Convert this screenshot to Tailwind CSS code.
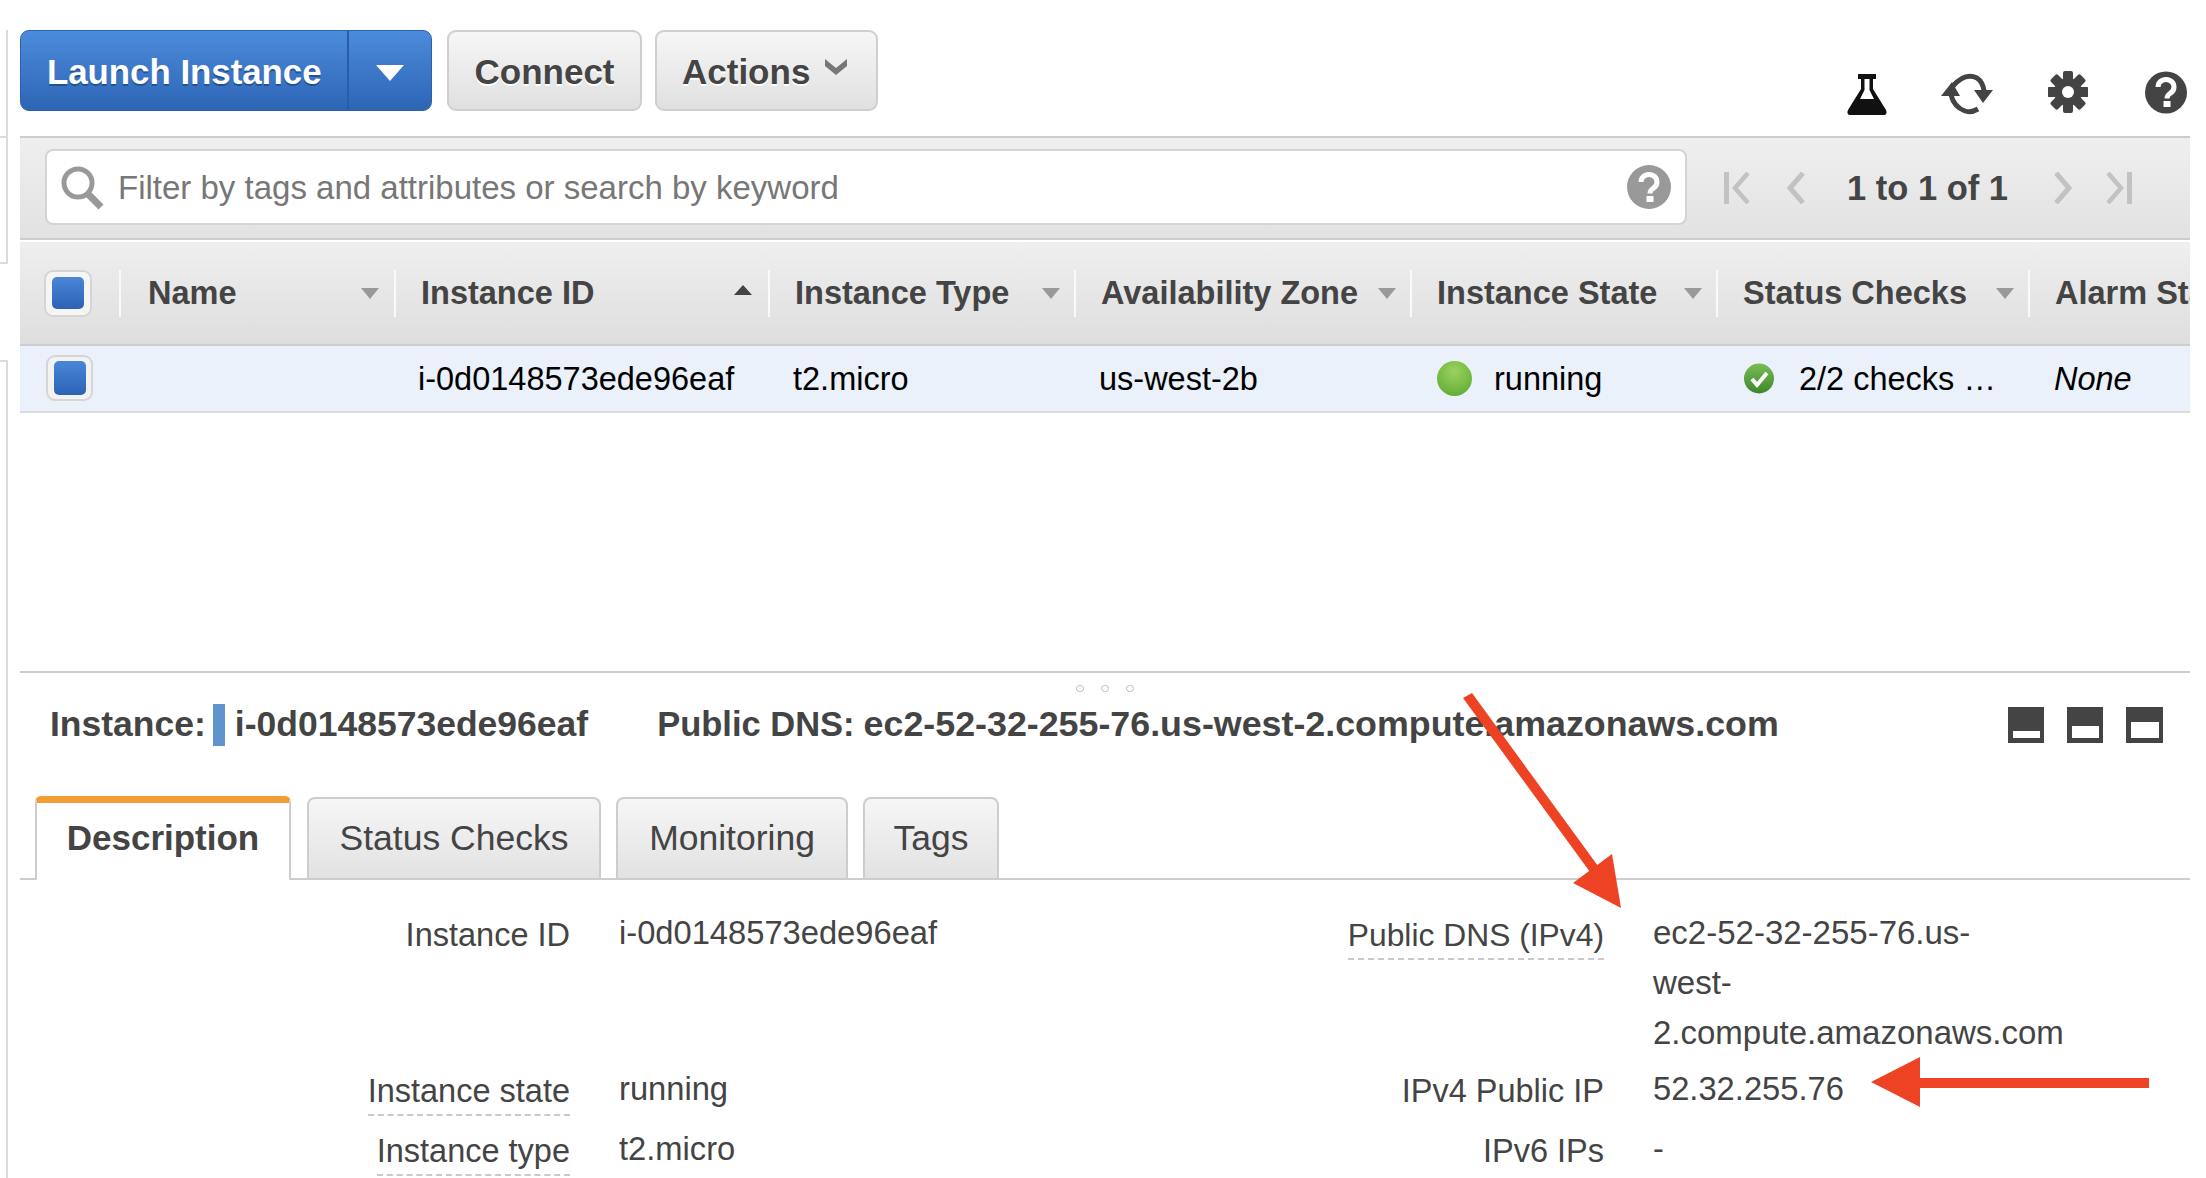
<!DOCTYPE html>
<html lang="en">
<head>
  <meta charset="UTF-8" />
  <title>EC2 Instances</title>
  <script src="https://cdn.jsdelivr.net/npm/@tailwindcss/browser@4"></script>
</head>
<body class="relative h-[1178px] w-[2206px] overflow-hidden bg-white font-['Liberation_Sans',Arial,sans-serif] text-[#444]">
  <!-- sidebar edge -->
  <div class="absolute left-0 top-[30px] h-[108px] w-[8px] border-r-2 border-b-2 border-[#dcdcdc]"></div>
  <div class="absolute left-0 top-[138px] h-[126px] w-[8px] border-r-2 border-b-2 border-[#dcdcdc]"></div>
  <div class="absolute left-0 top-[360px] h-[818px] w-[8px] border-r-2 border-t-2 border-[#dcdcdc]"></div>

  <main class="ml-[20px] flex w-[2170px] flex-col">
    <!-- action bar -->
    <div class="flex h-[136px] items-start pt-[30px]">
      <div class="flex h-[81px] w-[412px] rounded-[9px] border border-[#2a62b0] bg-gradient-to-b from-[#4c8bdb] to-[#2e65b5] text-white">
        <div class="flex w-[328px] items-center border-r-2 border-[#2a5da8] pl-[26px] pt-[3px] text-[34.800px] font-bold [text-shadow:0_2px_0_#24528f]">Launch Instance</div>
        <div class="flex flex-1 items-center justify-center pt-[4px]">
          <svg width="28" height="16" viewBox="0 0 28 16"><path d="M0 0h28L14 16z" fill="#fff"/></svg>
        </div>
      </div>
      <div class="ml-[15px] flex h-[81px] w-[195px] items-center justify-center rounded-[9px] border-2 border-[#cfcfcf] bg-gradient-to-b from-[#f6f6f6] to-[#e0e0e0] pt-[3px] text-[35px] font-bold [text-shadow:0_2px_0_#fff]">Connect</div>
      <div class="ml-[13px] flex h-[81px] w-[223px] items-center rounded-[9px] border-2 border-[#cfcfcf] bg-gradient-to-b from-[#f6f6f6] to-[#e0e0e0] pl-[25px] pt-[3px] text-[35px] font-bold [text-shadow:0_2px_0_#fff]">
        Actions
        <svg class="mb-[10px] ml-[14px]" width="24" height="18" viewBox="0 0 24 18"><path d="M1 1l11 9 11-9v7L12 17 1 8z" fill="#777"/></svg>
      </div>
      <div class="ml-auto flex h-[86px] items-end pb-[1px] pr-[3px]">
        <svg width="40" height="42" viewBox="0 0 40 42"><path d="M11 1h18v5h-3v10l13 21q2 5-3 5H4q-5 0-3-5L14 16V6h-3z" fill="#111"/><path d="M17.500 6h5v11l4.500 9H13l4.500-9z" fill="#fff"/></svg>
        <svg class="ml-[54px]" width="52" height="43" viewBox="0 0 52 43">
          <path d="M12 14Q24 0 36 6q6 4 7 13" fill="none" stroke="#444" stroke-width="5"/>
          <path d="M10 23q3 12 14 16 6 2 13-2" fill="none" stroke="#444" stroke-width="5"/>
          <path d="M11 10L0 24h19zM42 31L33 18h19z" fill="#444"/>
        </svg>
        <svg class="mb-[2px] ml-[55px]" width="40" height="42" viewBox="0 0 40 42">
          <g fill="#444">
            <circle cx="20" cy="21" r="14"/>
            <rect x="15" y="0" width="10" height="42" rx="2"/>
            <rect x="15" y="0" width="10" height="42" rx="2" transform="rotate(45 20 21)"/>
            <rect x="15" y="0" width="10" height="42" rx="2" transform="rotate(90 20 21)"/>
            <rect x="15" y="0" width="10" height="42" rx="2" transform="rotate(135 20 21)"/>
          </g>
          <circle cx="20" cy="21" r="6" fill="#fff"/>
        </svg>
        <svg class="mb-[1px] ml-[57px]" width="42" height="43" viewBox="0 0 42 43"><circle cx="21" cy="21.500" r="21" fill="#444"/><path d="M13 16a8 7.500 0 1 1 12 6.500q-3 2-3 5" fill="none" stroke="#fff" stroke-width="5"/><rect x="18.500" y="30" width="7" height="6" fill="#fff"/></svg>
      </div>
    </div>

    <!-- search bar -->
    <div class="flex h-[104px] items-center border-y-2 border-[#cdcdcd] bg-gradient-to-b from-[#efefef] to-[#e2e2e2] pl-[25px]">
      <div class="mb-[2px] flex h-[76px] w-[1642px] items-center rounded-[8px] border-2 border-[#d4d4d4] bg-white pl-[12px] pr-[14px]">
        <svg class="mt-[2px]" width="46" height="46" viewBox="0 0 46 46"><circle cx="19" cy="18" r="14" fill="none" stroke="#999" stroke-width="5"/><path d="M29 29l13 13" stroke="#999" stroke-width="7"/></svg>
        <span class="ml-[13px] mt-[2px] text-[33px] text-[#777]">Filter by tags and attributes or search by keyword</span>
        <svg class="ml-auto" width="44" height="44" viewBox="0 0 44 44"><circle cx="22" cy="22" r="22" fill="#999"/><path d="M14 17a8 7.500 0 1 1 12 6.500q-3 2-3 5" fill="none" stroke="#fff" stroke-width="5"/><rect x="19.500" y="31" width="7" height="6" fill="#fff"/></svg>
      </div>
      <svg class="ml-[37px]" width="26" height="32" viewBox="0 0 26 32"><rect x="0" y="0" width="5" height="32" fill="#c2c2c2"/><path d="M24 1L11 16l13 15" fill="none" stroke="#c2c2c2" stroke-width="4.500"/></svg>
      <svg class="ml-[37px]" width="18" height="32" viewBox="0 0 18 32"><path d="M16 1L3 16l13 15" fill="none" stroke="#c2c2c2" stroke-width="5"/></svg>
      <span class="ml-[42px] mt-[2px] text-[34.500px] font-bold">1 to 1 of 1</span>
      <svg class="ml-[46px]" width="18" height="32" viewBox="0 0 18 32"><path d="M2 1l13 15L2 31" fill="none" stroke="#c2c2c2" stroke-width="5"/></svg>
      <svg class="ml-[34px]" width="26" height="32" viewBox="0 0 26 32"><rect x="21" y="0" width="5" height="32" fill="#c2c2c2"/><path d="M2 1l13 15L2 31" fill="none" stroke="#c2c2c2" stroke-width="4.500"/></svg>
    </div>

    <!-- table header -->
    <div class="mt-[2px] grid h-[104px] grid-cols-[99px_275px_374px_306px_336px_306px_312px_1fr] items-center border-b-2 border-[#cdcdcd] bg-gradient-to-b from-[#efefef] to-[#dedede] text-[32.500px] font-bold">
      <div class="pl-[24px]"><div class="flex h-[47px] w-[48px] items-center justify-center rounded-[9px] border-2 border-[#d5d5d5] bg-[#f5f5f5]"><div class="h-[32px] w-[32px] rounded-[5px] bg-gradient-to-b from-[#4a86d8] to-[#2c62b4]"></div></div></div>
      <div class="flex h-[47px] items-center border-l-2 border-[#fafafa] pl-[27px] pr-[15px]">Name<svg class="ml-auto" width="18" height="11" viewBox="0 0 18 11"><path d="M0 0h18L9 11z" fill="#999"/></svg></div>
      <div class="flex h-[47px] items-center border-l-2 border-[#fafafa] pl-[25px] pr-[16px]">Instance ID<svg class="mb-[6px] ml-auto" width="18" height="10" viewBox="0 0 18 10"><path d="M0 10h18L9 0z" fill="#444"/></svg></div>
      <div class="flex h-[47px] items-center border-l-2 border-[#fafafa] pl-[25px] pr-[14px]">Instance Type<svg class="ml-auto" width="18" height="11" viewBox="0 0 18 11"><path d="M0 0h18L9 11z" fill="#999"/></svg></div>
      <div class="flex h-[47px] items-center border-l-2 border-[#fafafa] pl-[25px] pr-[14px]">Availability Zone<svg class="ml-auto" width="18" height="11" viewBox="0 0 18 11"><path d="M0 0h18L9 11z" fill="#999"/></svg></div>
      <div class="flex h-[47px] items-center border-l-2 border-[#fafafa] pl-[25px] pr-[14px]">Instance State<svg class="ml-auto" width="18" height="11" viewBox="0 0 18 11"><path d="M0 0h18L9 11z" fill="#999"/></svg></div>
      <div class="flex h-[47px] items-center border-l-2 border-[#fafafa] pl-[25px] pr-[14px]">Status Checks<svg class="ml-auto" width="18" height="11" viewBox="0 0 18 11"><path d="M0 0h18L9 11z" fill="#999"/></svg></div>
      <div class="flex h-[47px] items-center overflow-hidden whitespace-nowrap border-l-2 border-[#fafafa] pl-[25px]">Alarm Status</div>
    </div>

    <!-- selected row -->
    <div class="grid h-[67px] grid-cols-[99px_275px_374px_306px_336px_306px_312px_1fr] items-center border-b-2 border-[#dcdcdc] bg-[#eaf1fb] pt-[2px] text-[32.500px] text-black">
      <div class="-mt-[3px] pl-[26px]"><div class="flex h-[46px] w-[47px] items-center justify-center rounded-[9px] border-2 border-[#d5d5d5] bg-[#f2f2f2]"><div class="h-[34px] w-[32px] rounded-[5px] bg-gradient-to-b from-[#4a86d8] to-[#2c62b4]"></div></div></div>
      <div></div>
      <div class="pl-[24px]">i-0d0148573ede96eaf</div>
      <div class="pl-[25px]">t2.micro</div>
      <div class="pl-[25px]">us-west-2b</div>
      <div class="flex items-center pl-[27px]"><span class="-mt-[3px] h-[35px] w-[35px] rounded-full bg-[radial-gradient(circle_at_50%_30%,#9ad35f,#58a52c)]"></span><span class="ml-[22px]">running</span></div>
      <div class="flex items-center pl-[28px]">
        <svg class="-mt-[2px]" width="30" height="31" viewBox="0 0 30 31">
          <defs><linearGradient id="okFill" x1="0" y1="0" x2="0" y2="1"><stop offset="0" stop-color="#78bd55"/><stop offset="1" stop-color="#3d862b"/></linearGradient></defs>
          <circle cx="15" cy="15.500" r="15" fill="url(#okFill)"/><path d="M8 16l5 6 10-12" fill="none" stroke="#fff" stroke-width="4"/>
        </svg>
        <span class="ml-[25px]">2/2 checks …</span>
      </div>
      <div class="pl-[26px] italic">None</div>
    </div>

    <div class="h-[260px] border-b-2 border-[#cdcdcd]"></div>

    <!-- resize handle -->
    <div class="flex h-[19px] items-end justify-center gap-[17px]">
      <span class="h-[7px] w-[8px] rounded-full border border-[#bbb]"></span>
      <span class="h-[7px] w-[8px] rounded-full border border-[#bbb]"></span>
      <span class="h-[7px] w-[8px] rounded-full border border-[#bbb]"></span>
    </div>

    <!-- instance summary -->
    <div class="mt-[11px] flex h-[44px] items-center pl-[30px] pr-[27px] text-[35.500px] font-bold">
      <span>Instance:</span>
      <span class="ml-[7px] h-[42px] w-[12px] bg-[#5f94cd]"></span>
      <span class="ml-[10px]">i-0d0148573ede96eaf</span>
      <span class="ml-[69px] text-[34.500px]">Public DNS:</span>
      <span class="ml-[9px] text-[35.800px]">ec2-52-32-255-76.us-west-2.compute.amazonaws.com</span>
      <div class="ml-auto flex gap-[23px]">
        <span class="flex h-[36px] w-[36px] items-end justify-center bg-[#444] pb-[5px]"><span class="h-[7px] w-[27px] bg-white"></span></span>
        <span class="flex h-[36px] w-[36px] items-end justify-center bg-[#444] pb-[5px]"><span class="h-[12px] w-[27px] bg-white"></span></span>
        <span class="flex h-[36px] w-[37px] items-end justify-center bg-[#444] pb-[5px]"><span class="h-[16px] w-[28px] bg-white"></span></span>
      </div>
    </div>

    <!-- tabs -->
    <div class="mt-[49px] flex h-[84px] items-end gap-[15px] border-b-2 border-[#cdcdcd] pl-[15px] text-[35.500px]">
      <div class="z-10 -mb-[2px] mr-[1px] flex h-[84px] w-[256px] items-center justify-center rounded-t-[6px] border-x-2 border-t-[7px] border-x-[#cdcdcd] border-t-[#f39c36] bg-white pb-[6px] text-[35px] font-bold">Description</div>
      <div class="flex h-[81px] w-[294px] items-center justify-center rounded-t-[8px] border-2 border-b-0 border-[#cdcdcd] bg-gradient-to-b from-[#f6f6f6] to-[#e2e2e2]">Status Checks</div>
      <div class="flex h-[81px] w-[232px] items-center justify-center rounded-t-[8px] border-2 border-b-0 border-[#cdcdcd] bg-gradient-to-b from-[#f6f6f6] to-[#e2e2e2]">Monitoring</div>
      <div class="flex h-[81px] w-[136px] items-center justify-center rounded-t-[8px] border-2 border-b-0 border-[#cdcdcd] bg-gradient-to-b from-[#f6f6f6] to-[#e2e2e2]">Tags</div>
    </div>

    <!-- description fields -->
    <div class="mt-[30px] grid grid-cols-[550px_49px_400px_585px_49px_1fr] grid-rows-[156px_60px_50px] text-[32.500px] leading-[50px]">
      <div class="col-start-1 text-right">Instance ID</div>
      <div class="col-start-3 -mt-[2px] text-[32.700px]">i-0d0148573ede96eaf</div>
      <div class="col-start-4 text-right"><span class="inline-block border-b-2 border-dashed border-[#c9c9c9] text-[31.800px] leading-[46px]">Public DNS (IPv4)</span></div>
      <div class="col-start-6 -mt-[2px] whitespace-nowrap text-[33px]">ec2-52-32-255-76.us-<br />west-<br />2.compute.amazonaws.com</div>

      <div class="col-start-1 text-right"><span class="inline-block border-b-2 border-dashed border-[#c9c9c9] leading-[46px]">Instance state</span></div>
      <div class="col-start-3 -mt-[2px] text-[32.700px]">running</div>
      <div class="col-start-4 text-right">IPv4 Public IP</div>
      <div class="col-start-6 -mt-[2px] text-[32.700px]">52.32.255.76</div>

      <div class="col-start-1 text-right"><span class="inline-block border-b-2 border-dashed border-[#c9c9c9] leading-[46px]">Instance type</span></div>
      <div class="col-start-3 -mt-[2px] text-[32.700px]">t2.micro</div>
      <div class="col-start-4 text-right">IPv6 IPs</div>
      <div class="col-start-6 -mt-[2px]">-</div>
    </div>
  </main>

  <!-- annotation arrows drawn over the page -->
  <svg class="pointer-events-none absolute left-0 top-0" width="2206" height="1178" viewBox="0 0 2206 1178">
    <polygon points="1463,698 1472,693 1598,866 1590,872" fill="#ee4225"/>
    <polygon points="1621,908 1612,854 1573,883" fill="#ee4225"/>
    <polygon points="1871,1082 1920,1057 1920,1107" fill="#ee4225"/>
    <rect x="1918" y="1078" width="231" height="10" fill="#ee4225"/>
  </svg>
</body>
</html>
